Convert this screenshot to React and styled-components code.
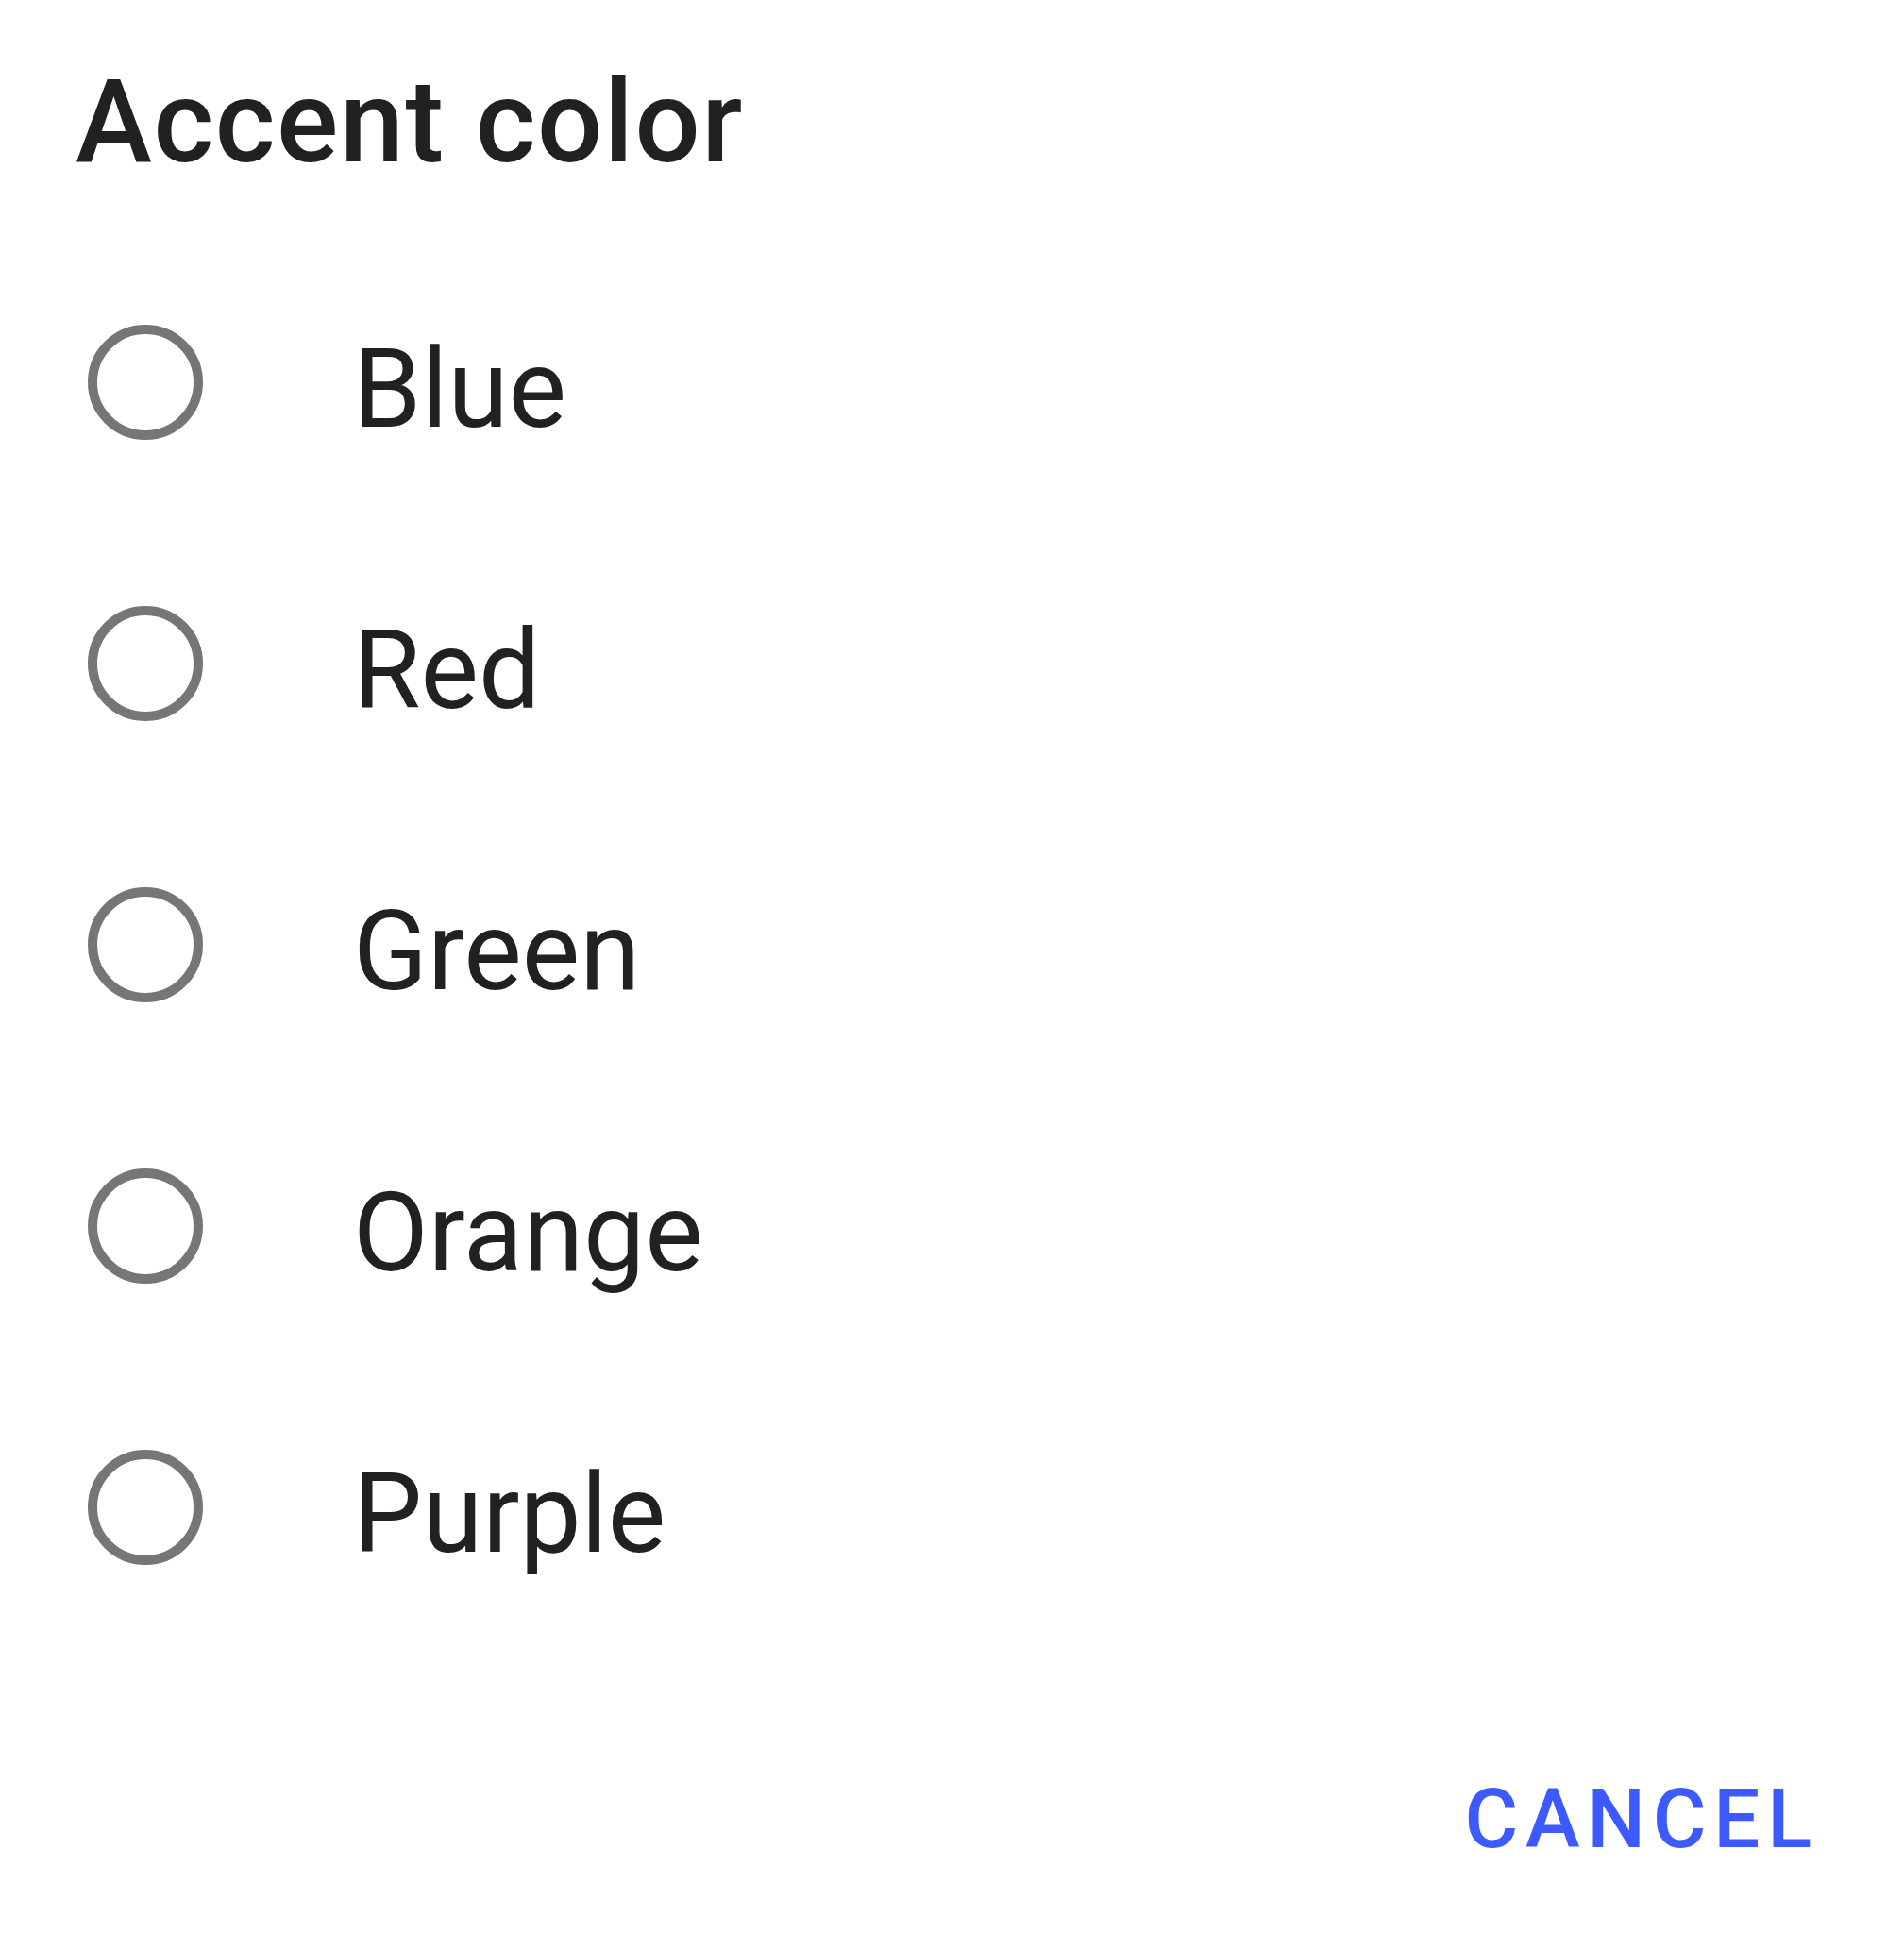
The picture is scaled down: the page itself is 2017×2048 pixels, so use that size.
import styled, { createGlobalStyle } from "styled-components";

const GlobalStyle = createGlobalStyle`
  html, body {
    margin: 0;
    padding: 0;
    background: #ffffff;
  }
  body {
    font-family: Roboto, "Liberation Sans", sans-serif;
    color: #212121;
  }
`;

const colors = ["Blue", "Red", "Green", "Orange", "Purple"];

const App = () => {
  return (
    <>
      <GlobalStyle />
      <StDialog>
        <StTitle>Accent color</StTitle>
        <StList>
          {colors.map((name) => (
            <StRow key={name}>
              <StRadio />
              <StLabel>{name}</StLabel>
            </StRow>
          ))}
        </StList>
        <StActions>
          <StButton>Cancel</StButton>
        </StActions>
      </StDialog>
    </>
  );
};

export default App;

const StDialog = styled.div`
  width: 2017px;
  height: 2048px;
  display: flex;
  flex-direction: column;
  background: #ffffff;
`;

const StTitle = styled.h1`
  margin: 0;
  padding: 69px 0 0 80px;
  font-size: 122px;
  line-height: 122px;
  font-weight: 500;
  letter-spacing: 1.6px;
  color: #212121;
`;

const StList = styled.div`
  display: flex;
  flex-direction: column;
  margin-top: 65px;
`;

const StRow = styled.div`
  display: flex;
  align-items: center;
  height: 298px;
  padding-left: 93px;
`;

const StRadio = styled.div`
  box-sizing: border-box;
  width: 122px;
  height: 122px;
  border: 10px solid #767676;
  border-radius: 50%;
  flex-shrink: 0;
`;

const StLabel = styled.span`
  margin-left: 159px;
  padding-top: 13px;
  font-size: 116px;
  line-height: 116px;
  font-weight: 400;
  color: #212121;
`;

const StActions = styled.div`
  display: flex;
  justify-content: flex-end;
  padding: 138px 90px 0 0;
`;

const StButton = styled.button`
  border: none;
  background: none;
  padding: 0;
  font-family: Roboto, "Liberation Sans", sans-serif;
  font-size: 87px;
  line-height: 87px;
  font-weight: 500;
  letter-spacing: 0.089em;
  text-transform: uppercase;
  color: #3d5afe;
  cursor: pointer;
`;
